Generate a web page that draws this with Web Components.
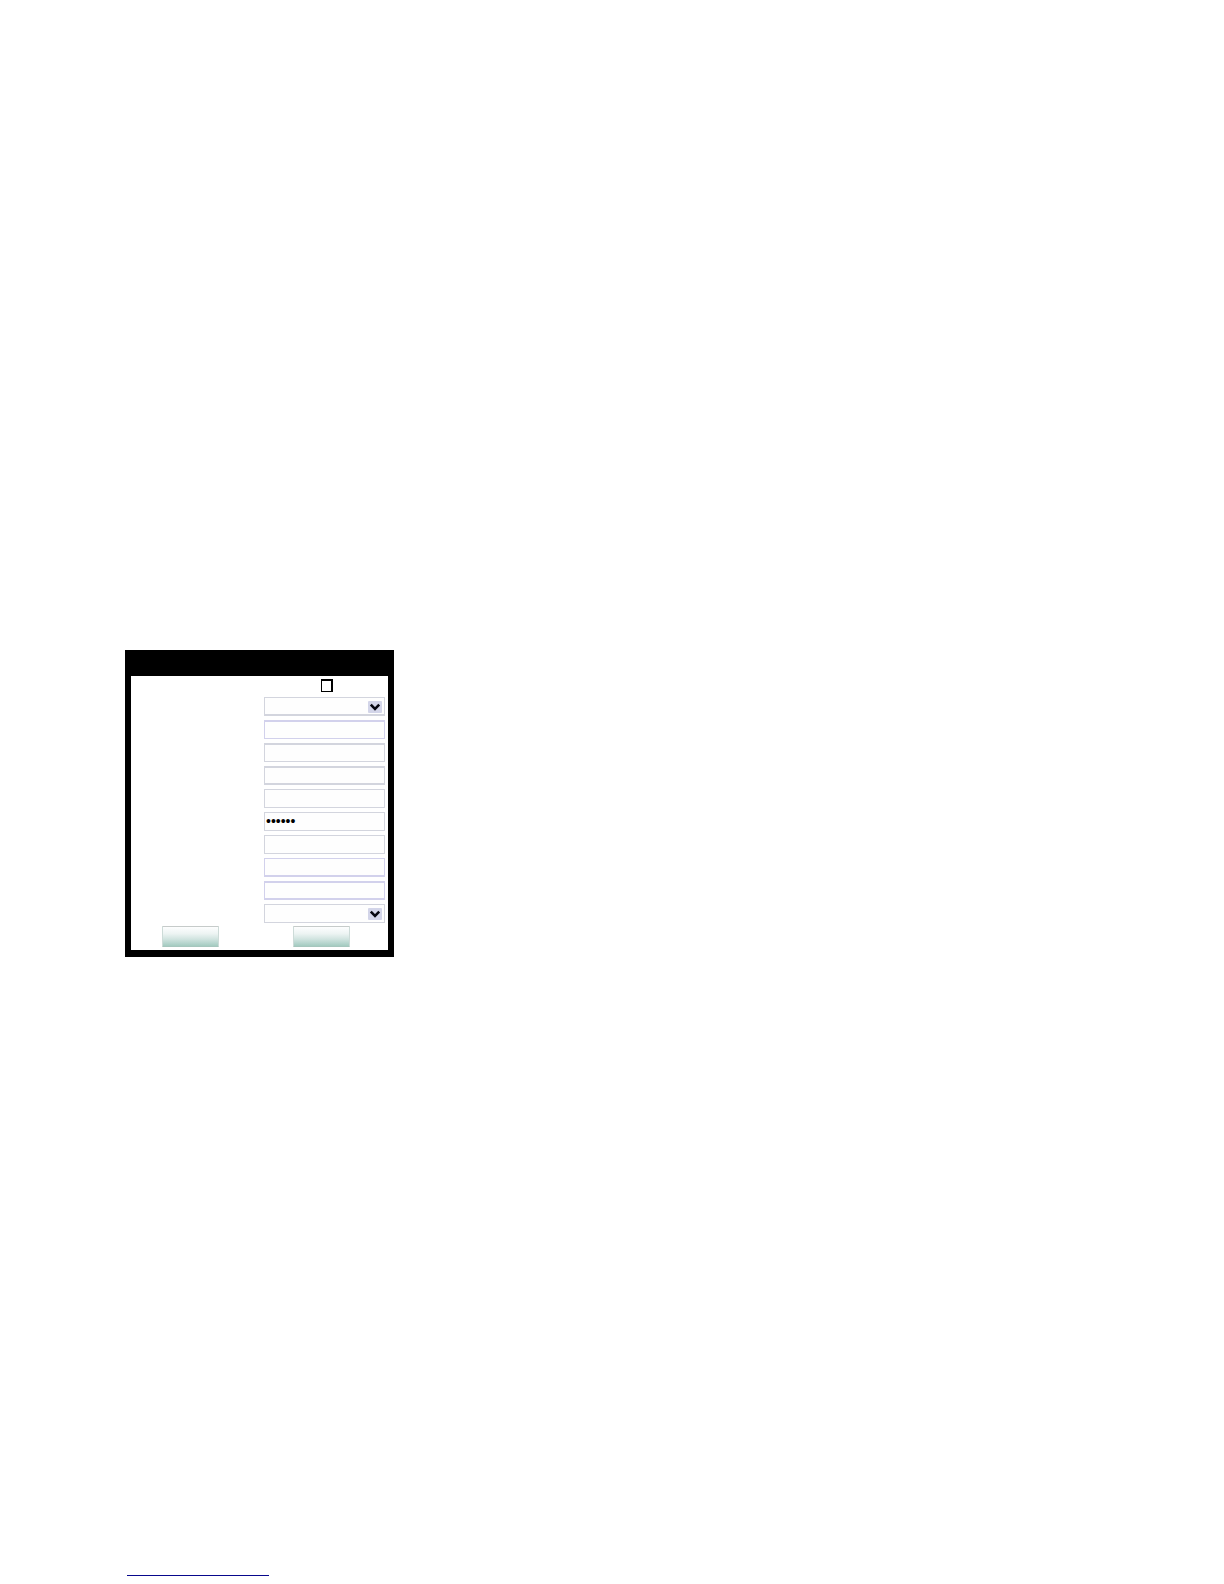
<!DOCTYPE html>
<html lang="en">
<head>
<meta charset="utf-8">
<title>Settings</title>
<style>
    body {
        margin: 0;
        background: #fff;
        font-family: "Liberation Sans", Arial, sans-serif;
    }
</style>
</head>
<body>
<manual-page>
    <settings-panel>
        <setting-row kind="checkbox" name="Enable"></setting-row>
        <setting-row kind="select" name="Type" class="low"></setting-row>
        <setting-row name="Field 1" class="violet high"></setting-row>
        <setting-row name="Field 2" class="high"></setting-row>
        <setting-row name="Field 3" class="high low"></setting-row>
        <setting-row name="Field 4"></setting-row>
        <setting-row kind="password" name="Password" value="secret"></setting-row>
        <setting-row name="Field 5"></setting-row>
        <setting-row name="Field 6" class="violet low"></setting-row>
        <setting-row name="Field 7" class="violet high low"></setting-row>
        <setting-row kind="select" name="Mode"></setting-row>
        <panel-button slot="actions" name="Confirm"></panel-button>
        <panel-button slot="actions" name="Cancel"></panel-button>
    </settings-panel>
    <footer-link slot="footer"></footer-link>
</manual-page>

<script>
class ManualPage extends HTMLElement {
    constructor() {
        super();
        this.attachShadow({ mode: "open" });
        this.shadowRoot.innerHTML = `
        <style>
            :host {
                display: flex;
                flex-direction: column;
                box-sizing: border-box;
                min-height: 100vh;
                padding: 650px 125px 8px;
            }

            footer {
                margin-top: auto;
                padding-left: 2px;
            }
        </style>

        <main><slot></slot></main>
        <footer><slot name="footer"></slot></footer>
        `;
    }
}

class SettingsPanel extends HTMLElement {
    constructor() {
        super();
        this.attachShadow({ mode: "open" });
        this.shadowRoot.innerHTML = `
        <style>
            :host {
                display: block;
                box-sizing: border-box;
                max-width: 269px;
                padding: 0 6px 7px;
                background: #000;
            }

            header {
                height: 26px;
            }

            form {
                display: flex;
                flex-direction: column;
                gap: 4px;
                padding: 2px 3px 3px 0;
                background: #fff;
            }

            .actions {
                display: flex;
                gap: 74px;
                padding-left: 31px;
                margin-top: -1px;
            }
        </style>

        <header></header>
        <form>
            <slot></slot>
            <div class="actions"><slot name="actions"></slot></div>
        </form>
        `;
    }
}

class SettingRow extends HTMLElement {
    constructor() {
        super();
        this.kind = this.getAttribute("kind") || "text";
        this.name = this.getAttribute("name") || "";
        this.value = this.getAttribute("value") || "";

        this.attachShadow({ mode: "open" });
        this.shadowRoot.innerHTML = this._getTemplate();
    }

    _getControl() {
        if (this.kind === "checkbox") {
            return `<div class="check"><input type="checkbox" aria-label="${this.name}"></div>`;
        }
        if (this.kind === "select") {
            return `
            <div class="select">
                <select class="box" aria-label="${this.name}"></select>
                <svg width="14" height="12" viewBox="0 0 14 12" aria-hidden="true">
                    <rect width="14" height="12" rx="1" fill="#d3d5e9"/>
                    <path d="M2.8 3.6L7 7.8l4.2-4.2" fill="none" stroke="#05050f" stroke-width="2.6"/>
                </svg>
            </div>`;
        }
        return `<input class="box" type="${this.kind}" value="${this.value}" autocomplete="off" aria-label="${this.name}">`;
    }

    _getTemplate() {
        return `
        <style>
            :host {
                --line: #d3d5de;
                display: grid;
                grid-template-columns: 1fr 121px;
            }

            :host(.violet) {
                --line: #d2d1ec;
            }

            .box {
                grid-column: 2;
                box-sizing: border-box;
                width: 100%;
                height: 19px;
                margin: 0;
                padding: 0 2px 2px 1px;
                border: 1px solid var(--line);
                border-radius: 0;
                background: #fefefe;
                appearance: none;
                color: #000;
                font: 14px "Liberation Sans", Arial, sans-serif;
            }

            :host(.high) .box {
                border-top-width: 2px;
            }

            :host(.low) .box {
                border-bottom-width: 2px;
            }

            .select {
                grid-column: 2;
                display: grid;
                align-items: center;
            }

            .select > * {
                grid-area: 1 / 1;
            }

            svg {
                justify-self: end;
                margin-right: 3px;
                pointer-events: none;
            }

            .check {
                grid-column: 2;
                display: flex;
                align-items: center;
                height: 15px;
                padding-left: 57px;
            }

            .check input {
                appearance: none;
                box-sizing: border-box;
                width: 12px;
                height: 13px;
                margin: 0;
                border: 1px solid #000;
                border-width: 2px 2px 1px 1px;
                background: #fff;
            }

            .check input:checked {
                background: #000;
            }
        </style>

        ${this._getControl()}
        `;
    }
}

class PanelButton extends HTMLElement {
    constructor() {
        super();
        this.attachShadow({ mode: "open" });
        this.shadowRoot.innerHTML = `
        <style>
            :host {
                display: block;
            }

            button {
                display: block;
                box-sizing: border-box;
                width: 57px;
                height: 21px;
                padding: 0;
                border: 1px solid;
                border-color: #c6cbca #cddbd8 #a6c6bd #cddbd8;
                border-radius: 1px;
                background: linear-gradient(#fdfefe, #edf4f3 35%, #cfe3df 65%, #a4cbc1);
            }
        </style>

        <button type="button" aria-label="${this.getAttribute("name") || ""}"></button>
        `;
    }
}

class FooterLink extends HTMLElement {
    constructor() {
        super();
        this.attachShadow({ mode: "open" });
        this.shadowRoot.innerHTML = `
        <style>
            :host {
                display: block;
            }

            a {
                display: block;
                max-width: 142px;
                height: 14px;
                border-bottom: 1px solid #08088c;
            }
        </style>

        <a href="#" aria-label="Website"></a>
        `;
    }
}

customElements.define("manual-page", ManualPage);
customElements.define("settings-panel", SettingsPanel);
customElements.define("setting-row", SettingRow);
customElements.define("panel-button", PanelButton);
customElements.define("footer-link", FooterLink);
</script>
</body>
</html>
